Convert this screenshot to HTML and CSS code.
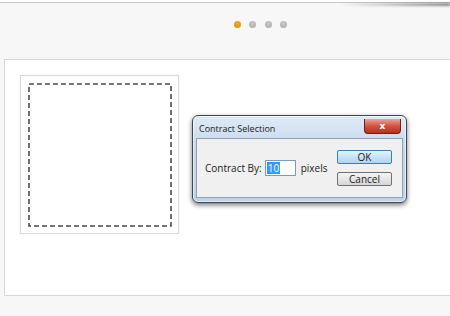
FILE: index.html
```html
<!DOCTYPE html>
<html lang="en">
<head>
    <meta charset="UTF-8">
    <title>Contract Selection</title>
    <link rel="stylesheet" href="styles.css">
</head>
<body>
    <div class="topbar"></div>

    <div class="pager">
        <span class="dot active"></span>
        <span class="dot"></span>
        <span class="dot"></span>
        <span class="dot"></span>
    </div>

    <div class="stage">
        <div class="canvas">
            <svg class="marquee" width="144" height="144" viewBox="0 0 144 144">
                <rect x="1" y="1" width="142" height="142" fill="none" stroke="#4a4a4a" stroke-width="1.6" stroke-dasharray="5 3"/>
            </svg>
        </div>

        <div class="dialog">
            <div class="dialog-title">
                <span>Contract Selection</span>
                <button class="close">x</button>
            </div>
            <div class="dialog-body">
                <label class="field">
                    <span>Contract By:</span>
                    <span class="amount"><span class="selected">10</span></span>
                    <span>pixels</span>
                </label>
                <div class="actions">
                    <button class="btn btn-default">OK</button>
                    <button class="btn">Cancel</button>
                </div>
            </div>
        </div>
    </div>
</body>
</html>
```

FILE: styles.css
```css
* {
    margin: 0;
    padding: 0;
    box-sizing: border-box;
}

body {
    background-color: #f7f7f7;
    font-family: 'Open Sans', sans-serif;
    height: 316px;
    overflow: hidden;
}

.topbar {
    height: 3px;
    background-color: #ffffff;
    border-bottom: 1px solid #c9c9c9;
    position: relative;
}

.topbar::after {
    content: '';
    position: absolute;
    top: 3px;
    right: 0;
    width: 110px;
    height: 3px;
    background: linear-gradient(to right, rgba(0, 0, 0, 0), rgba(0, 0, 0, 0.45));
    filter: blur(1px);
}

.pager {
    display: flex;
    gap: 8px;
    padding-top: 18px;
    padding-left: 234px;
}

.dot {
    width: 7px;
    height: 7px;
    border-radius: 50%;
    background: radial-gradient(circle at 50% 35%, #c9c9c9, #a9a9a9);
}

.dot:nth-child(n+3) {
    margin-left: 0.5px;
}

.dot.active {
    background: radial-gradient(circle at 50% 35%, #f5a623, #e08a10);
}

.stage {
    margin-top: 31px;
    margin-left: 4px;
    height: 237px;
    background-color: #ffffff;
    border: 1px solid #d6d6d6;
    border-right: none;
    padding: 15px;
    display: flex;
    align-items: flex-start;
}

.canvas {
    width: 159px;
    height: 159px;
    border: 1px solid #d9d9d9;
    box-shadow: 0 0 2px rgba(0, 0, 0, 0.08);
    padding: 7px;
    flex-shrink: 0;
}

.marquee {
    display: block;
}

.dialog {
    margin-left: 13px;
    margin-top: 40px;
    width: 215px;
    height: 88px;
    border: 1px solid #3b4756;
    border-radius: 6px;
    background: linear-gradient(to bottom, #dfeaf6, #c5d7eb 40%, #bed2e8);
    box-shadow: 0 2px 5px rgba(0, 0, 0, 0.55), inset 0 0 0 1px rgba(255, 255, 255, 0.6);
    padding: 0 3px 4px;
    display: flex;
    flex-direction: column;
    font-size: 10px;
    color: #1a1a1a;
}

.dialog-title {
    height: 22px;
    display: flex;
    justify-content: space-between;
    align-items: flex-start;
    padding-left: 3px;
}

.dialog-title span {
    font-size: 9px;
    line-height: 22px;
    padding-top: 2px;
}

.close {
    margin-top: 3px;
    margin-right: 2px;
    width: 37px;
    height: 15px;
    border: 1px solid #6b2118;
    border-top: none;
    border-radius: 0 0 4px 4px;
    background: linear-gradient(to bottom, #e8a597, #d2533f 50%, #b8301f);
    color: #ffffff;
    font-family: 'DejaVu Sans', sans-serif;
    font-weight: 700;
    font-size: 9px;
    line-height: 12px;
}

.dialog-body {
    flex: 1;
    background-color: #f0f0f0;
    border: 1px solid #8fa3b8;
    display: flex;
    align-items: center;
    padding-left: 8px;
    padding-right: 10px;
}

.field {
    display: flex;
    align-items: center;
}

.amount {
    width: 31px;
    height: 16px;
    margin-left: 3px;
    margin-right: 5px;
    background-color: #ffffff;
    border: 1px solid #7a9bbf;
    padding: 1px 1px;
    display: flex;
    align-items: center;
}

.selected {
    background-color: #3399ff;
    color: #ffffff;
    line-height: 12px;
    padding: 0 1px;
}

.actions {
    margin-left: auto;
    display: flex;
    flex-direction: column;
    gap: 8px;
}

.btn {
    width: 55px;
    height: 14px;
    border: 1px solid #707070;
    border-radius: 2px;
    background: linear-gradient(to bottom, #f4f4f4, #e6e6e6 50%, #d6d6d6);
    font-family: 'Open Sans', sans-serif;
    font-size: 10px;
    line-height: 12px;
    color: #1a1a1a;
}

.btn-default {
    border-color: #3c7fb1;
    background: linear-gradient(to bottom, #e6f3fb, #c6e3f6 50%, #aed6f1);
}
```
